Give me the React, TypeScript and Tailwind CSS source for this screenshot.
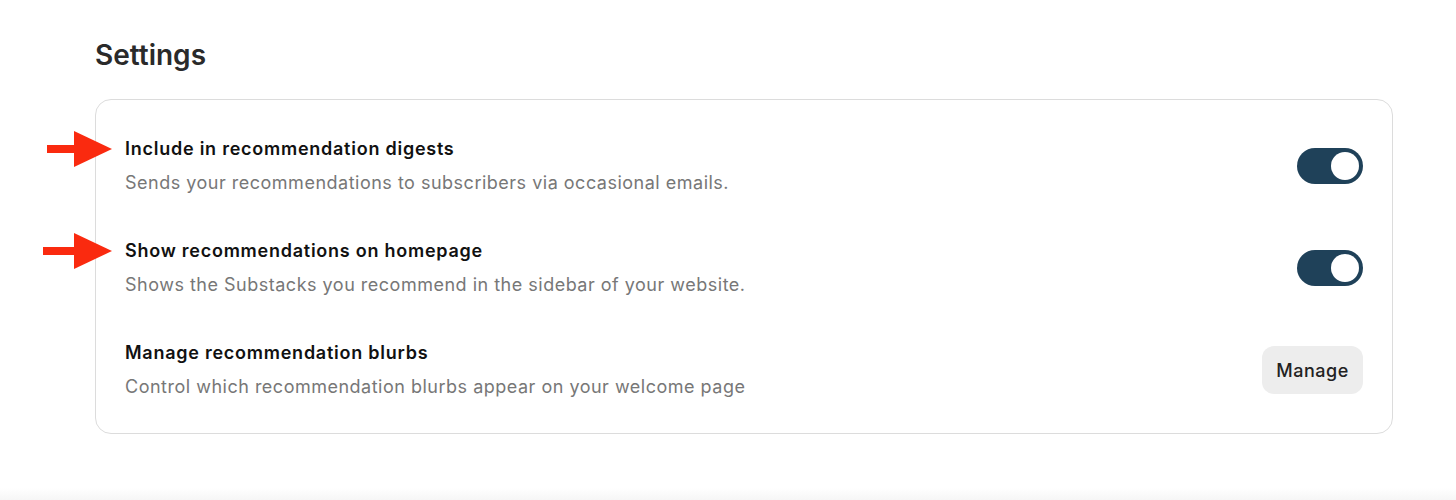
import { ReactNode } from "react";

function Arrow({ shaft }: { shaft: number }) {
  const w = shaft + 38;
  return (
    <svg
      width={w}
      height={38}
      viewBox={`0 0 ${w} 38`}
      className="absolute top-[-7px]"
      style={{ left: -w - 13 }}
    >
      <rect x="0" y="15" width={shaft + 2} height="8" fill="#fa2a0f" />
      <polygon points={`${shaft},1 ${w},19 ${shaft},37`} fill="#fa2a0f" />
    </svg>
  );
}

function Toggle() {
  return (
    <div className="w-[66px] h-[36px] rounded-full bg-[#1f4159] flex items-center justify-end pr-[4px]">
      <div className="w-[28px] h-[28px] rounded-full bg-white" />
    </div>
  );
}

type RowProps = {
  title: string;
  desc: string;
  control: ReactNode;
  arrow?: number;
};

function Row({ title, desc, control, arrow }: RowProps) {
  return (
    <div className="flex items-center justify-between">
      <div className="relative">
        {arrow && <Arrow shaft={arrow} />}
        <div className="text-[18px] leading-[24px] font-semibold tracking-[0.75px] text-[#111]">{title}</div>
        <div className="mt-[10px] text-[18px] leading-[24px] tracking-[0.5px] text-[#777]">{desc}</div>
      </div>
      {control}
    </div>
  );
}

export default function App() {
  return (
    <div className="w-[1456px] h-[500px] bg-white relative font-['Inter',sans-serif] overflow-hidden">
      <div className="pl-[95px] pr-[63px] pt-[39px]">
        <h1 className="text-[28px] leading-[32px] font-semibold text-[#2a2a2a]">Settings</h1>
        <div className="mt-[28px] border border-[#dcdcdc] rounded-[16px] pl-[29px] pr-[29px] pt-[37px] pb-[34px] flex flex-col gap-[44px]">
          <Row
            arrow={27}
            title="Include in recommendation digests"
            desc="Sends your recommendations to subscribers via occasional emails."
            control={<Toggle />}
          />
          <Row
            arrow={31}
            title="Show recommendations on homepage"
            desc="Shows the Substacks you recommend in the sidebar of your website."
            control={<Toggle />}
          />
          <Row
            title="Manage recommendation blurbs"
            desc="Control which recommendation blurbs appear on your welcome page"
            control={
              <button className="w-[101px] h-[48px] rounded-[12px] bg-[#ededed] text-[18px] tracking-[0.5px] font-medium text-[#222]">
                Manage
              </button>
            }
          />
        </div>
      </div>
      <div className="absolute left-0 right-0 bottom-0 h-[12px] bg-gradient-to-b from-white to-[#f6f6f6]" />
    </div>
  );
}
